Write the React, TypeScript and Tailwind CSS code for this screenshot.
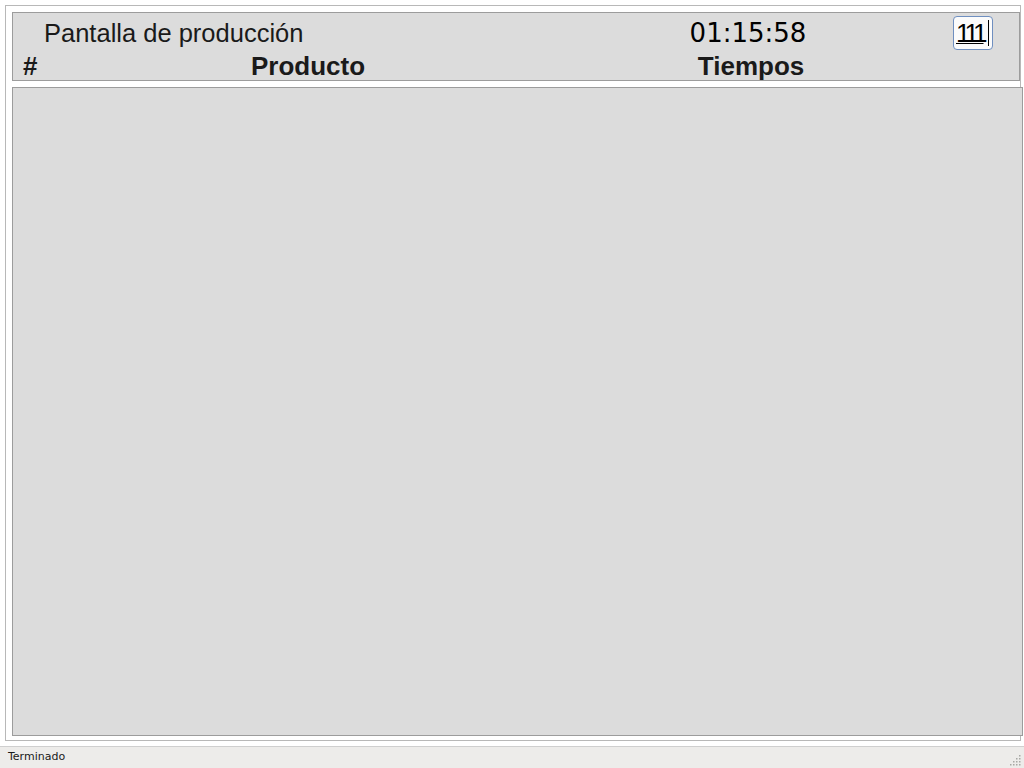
export default function App() {
  return (
    <div className="w-[1024px] h-[768px] bg-white overflow-hidden font-['Liberation_Sans',sans-serif] text-[#1a1a1a]">
      <div className="pt-[5px] pl-[5px]">
        {/* Page frame */}
        <div className="w-[1016px] h-[736px] border border-[#b8b8b8] pt-[6px] pl-[6px]">
          {/* Header */}
          <div className="w-[1008px] h-[69px] border border-[#9c9c9c] bg-[#dcdcdc] flex flex-col">
            <div className="grid grid-cols-[27px_536px_350px_1fr] h-[37px]">
              <div />
              <div className="pt-[8px] pl-[4px] text-[25.5px] leading-none">Pantalla de producción</div>
              <div className="pt-[7px] pr-[6px] text-center font-['DejaVu_Sans',sans-serif] text-[26px] leading-none text-black">
                01:15:58
              </div>
              <div className="flex justify-center pt-[3px] pl-[1px]">
                <div className="w-[40px] h-[34px] rounded-[4px] border border-[#6f8fc0] bg-[#fbfbfb] flex items-center overflow-hidden pl-[2px]">
                  <span className="text-[26px] leading-none tracking-[-4px] underline decoration-1 underline-offset-[1px] text-black">111</span>
                  <span className="ml-[4px] w-px h-[26px] bg-black" />
                </div>
              </div>
            </div>
            <div className="grid grid-cols-[27px_536px_350px_1fr] flex-1 font-bold text-[26px] leading-none">
              <div className="pt-[3px] pl-[10px]">#</div>
              <div className="pt-[3px] text-center">Producto</div>
              <div className="pt-[3px] text-center">Tiempos</div>
              <div />
            </div>
          </div>
          {/* Body */}
          <div className="mt-[6px] w-[1011px] h-[649px] border border-[#9c9c9c] bg-[#dcdcdc]" />
        </div>
      </div>
      {/* Status bar */}
      <div className="mt-[5px] h-[22px] border-t border-[#cfcfcf] bg-[#edecea] flex items-center justify-between pl-[8px] pr-[3px]">
        <span className="font-['DejaVu_Sans',sans-serif] text-[11px] text-[#1a1a1a]">Terminado</span>
        <svg width="12" height="12" viewBox="0 0 12 12" className="self-end mb-[2px]">
          {[
            [10, 1],
            [10, 4],
            [7, 4],
            [10, 7],
            [7, 7],
            [4, 7],
            [10, 10],
            [7, 10],
            [4, 10],
            [1, 10],
          ].map(([x, y], i) => (
            <rect key={i} x={x} y={y} width="1.5" height="1.5" fill="#a8a8a4" />
          ))}
        </svg>
      </div>
    </div>
  );
}
